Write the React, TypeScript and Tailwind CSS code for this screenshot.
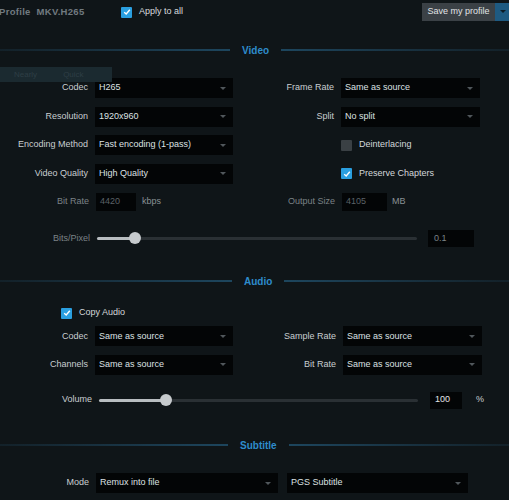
import React from 'react';

const FONT = { fontFamily: '"Liberation Sans", Arial, sans-serif' };

function Check({ on = true }: { on?: boolean }) {
  if (!on) {
    return <div className="w-[11px] h-[11px] rounded-[1px] bg-[#3a4044] shrink-0" />;
  }
  return (
    <div className="w-[11px] h-[11px] rounded-[1px] bg-[#2a9fe0] shrink-0 flex items-center justify-center">
      <svg width="8" height="8" viewBox="0 0 8 8">
        <path d="M1.2 4.2 L3.2 6 L6.8 1.8" fill="none" stroke="#ffffff" strokeWidth="1.4" />
      </svg>
    </div>
  );
}

function Select({ value, w }: { value: string; w: string }) {
  return (
    <div className={`${w} h-[20px] bg-[#030506] flex items-center justify-between pl-[4px] pr-[7px] shrink-0`}>
      <span className="text-[9px] text-[#dde1e3]">{value}</span>
      <div className="w-0 h-0 border-l-[3px] border-r-[3px] border-t-[3px] border-l-transparent border-r-transparent border-t-[#50575b]" />
    </div>
  );
}

function Label({ text, w, dim = false }: { text: string; w: string; dim?: boolean }) {
  return (
    <div className={`${w} shrink-0 text-right pr-[7px] text-[9px] ${dim ? 'text-[#7b8286]' : 'text-[#c9ced1]'}`}>
      {text}
    </div>
  );
}

function SectionHeader({ title, left }: { title: string; left: string }) {
  return (
    <div className="h-[14px] flex items-center gap-[12px]">
      <div className={`${left} h-[2px] bg-gradient-to-r from-[#132129] to-[#1d465e]`} />
      <span className="text-[10px] font-bold text-[#2e8ccc]">{title}</span>
      <div className="flex-1 h-[2px] bg-gradient-to-r from-[#1d465e] to-[#132129]" />
    </div>
  );
}

function Slider({ pct }: { pct: number }) {
  return (
    <div className="relative flex-1 h-[12px] flex items-center">
      <div className="w-full h-[3px] bg-[#2a3034] rounded-full" />
      <div className="absolute left-0 h-[3px] bg-[#b8bdc0] rounded-full" style={{ width: `${pct}%` }} />
      <div
        className="absolute w-[12px] h-[12px] rounded-full bg-[#c6cacd] -ml-[6px]"
        style={{ left: `${pct}%` }}
      />
    </div>
  );
}

export default function App() {
  return (
    <div className="relative w-[509px] h-[500px] overflow-hidden bg-[#0f1518] select-none" style={FONT}>
      {/* top bar */}
      <div className="h-[24px] flex items-center">
        <span className="w-[122px] -ml-[1px] text-[9.5px] font-bold tracking-[0.3px] text-[#717a80]">
          Profile&nbsp; MKV.H265
        </span>
        <Check />
        <span className="ml-[7px] text-[9px] text-[#d8dcdf]">Apply to all</span>
        <div className="ml-auto flex h-[18px]">
          <div className="w-[73px] bg-[#3b4146] flex items-center justify-center text-[9px] text-[#e1e4e6]">
            Save my profile
          </div>
          <div className="w-[14px] bg-[#1e5a81] flex items-start justify-center pt-[7px]">
            <div className="w-0 h-0 border-l-[3px] border-r-[3px] border-t-[3px] border-l-transparent border-r-transparent border-t-[#0c1c26] ml-[2px]" />
          </div>
        </div>
      </div>

      {/* video */}
      <div className="mt-[19px]">
        <SectionHeader title="Video" left="w-[230px]" />
      </div>
      <div className="mt-[16.75px]">
        <div className="h-[28.5px] flex items-center">
          <Label text="Codec" w="w-[95px]" />
          <Select value="H265" w="w-[138px]" />
          <Label text="Frame Rate" w="w-[108px]" />
          <Select value="Same as source" w="w-[139px]" />
        </div>
        <div className="h-[28.5px] flex items-center">
          <Label text="Resolution" w="w-[95px]" />
          <Select value="1920x960" w="w-[138px]" />
          <Label text="Split" w="w-[108px]" />
          <Select value="No split" w="w-[139px]" />
        </div>
        <div className="h-[28.5px] flex items-center">
          <Label text="Encoding Method" w="w-[95px]" />
          <Select value="Fast encoding (1-pass)" w="w-[138px]" />
          <div className="ml-[108px] flex items-center gap-[7px]">
            <Check on={false} />
            <span className="text-[9px] text-[#d4d8db]">Deinterlacing</span>
          </div>
        </div>
        <div className="h-[28.5px] flex items-center">
          <Label text="Video Quality" w="w-[95px]" />
          <Select value="High Quality" w="w-[138px]" />
          <div className="ml-[108px] flex items-center gap-[7px]">
            <Check />
            <span className="text-[9px] text-[#d4d8db]">Preserve Chapters</span>
          </div>
        </div>
        <div className="h-[28.5px] flex items-center">
          <Label text="Bit Rate" w="w-[96px]" dim />
          <div className="w-[40px] h-[18px] bg-[#030506] flex items-center pl-[4px] text-[9px] text-[#5b6266]">4420</div>
          <span className="ml-[6px] w-[98px] text-[9px] text-[#8a9195]">kbps</span>
          <Label text="Output Size" w="w-[102px]" dim />
          <div className="w-[45px] h-[18px] bg-[#030506] flex items-center pl-[4px] text-[9px] text-[#5b6266]">4105</div>
          <span className="ml-[5px] text-[9px] text-[#8a9195]">MB</span>
        </div>
        <div className="mt-[8px] h-[28px] flex items-center">
          <Label text="Bits/Pixel" w="w-[97px]" dim />
          <Slider pct={12} />
          <div className="ml-[11px] w-[46px] h-[17px] bg-[#030506] flex items-center pl-[6px] text-[9px] text-[#7b8286]">0.1</div>
          <div className="w-[35px]" />
        </div>
      </div>

      {/* audio */}
      <div className="mt-[21.75px]">
        <SectionHeader title="Audio" left="w-[232px]" />
      </div>
      <div className="mt-[16px] h-[18px] flex items-center pl-[61px] gap-[7px]">
        <Check />
        <span className="text-[9px] text-[#d4d8db]">Copy Audio</span>
      </div>
      <div className="h-[28.5px] flex items-center">
        <Label text="Codec" w="w-[95px]" />
        <Select value="Same as source" w="w-[138px]" />
        <Label text="Sample Rate" w="w-[110px]" />
        <Select value="Same as source" w="w-[139px]" />
      </div>
      <div className="h-[28.5px] flex items-center">
        <Label text="Channels" w="w-[95px]" />
        <Select value="Same as source" w="w-[138px]" />
        <Label text="Bit Rate" w="w-[110px]" />
        <Select value="Same as source" w="w-[139px]" />
      </div>
      <div className="mt-[7px] h-[28px] flex items-center">
        <Label text="Volume" w="w-[99px]" />
        <Slider pct={21} />
        <div className="ml-[12px] w-[32px] h-[17px] bg-[#030506] flex items-center pl-[5px] text-[9px] text-[#e1e4e6]">100</div>
        <span className="ml-[14px] w-[33px] text-[9px] text-[#c9ced1]">%</span>
      </div>

      {/* subtitle */}
      <div className="mt-[24px]">
        <SectionHeader title="Subtitle" left="w-[228px]" />
      </div>
      <div className="mt-[21px] h-[20px] flex items-center">
        <Label text="Mode" w="w-[96px]" />
        <Select value="Remux into file" w="w-[182px]" />
        <div className="w-[9px]" />
        <Select value="PGS Subtitle" w="w-[181px]" />
      </div>

      {/* faded tab strip lying over the panel */}
      <div className="absolute left-0 top-[67px] w-[112px] h-[15px] bg-[#1b2a30] flex items-center text-[8px] text-[#2e3e45]">
        <span className="ml-[14px]">Nearly</span>
        <span className="ml-[26px]">Quick</span>
      </div>
    </div>
  );
}
